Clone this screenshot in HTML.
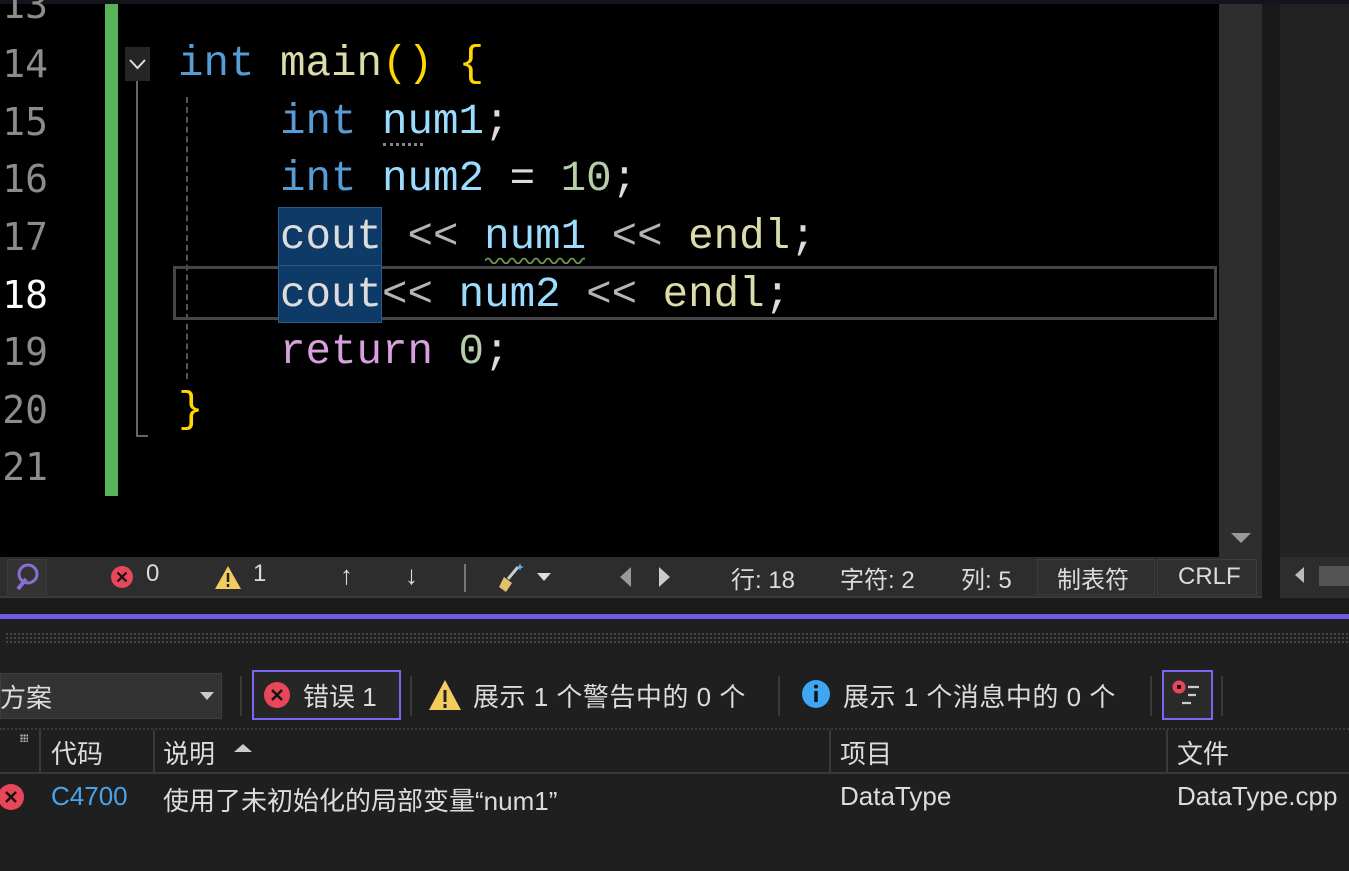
<!DOCTYPE html>
<html><head><meta charset="utf-8"><style>
*{margin:0;padding:0;box-sizing:border-box}
body{width:1349px;height:871px;overflow:hidden;background:#1f1f1f;position:relative;font-family:"Liberation Sans","Noto Sans CJK SC",sans-serif;color:#dcdcdc}
.abs{position:absolute}
.code{font-family:"Liberation Mono","DejaVu Sans Mono",monospace;font-size:42.5px;line-height:57.6px;white-space:pre;position:absolute}
.ln{position:absolute;left:0;width:48px;text-align:right;font-family:"DejaVu Sans Mono",monospace;font-size:38px;line-height:57.6px;color:#8c8c8c}
.k{color:#569cd6}.f{color:#dcdcaa}.p{color:#ffd700}.v{color:#9cdcfe}.n{color:#b5cea8}.r{color:#d8a0df}.o{color:#b4b4b4}.w{color:#dcdcdc}
.sb{font-size:24px;color:#dcdcdc;top:560px}
.t{font-size:26px;color:#dcdcdc}
</style></head><body>
<div class="abs" style="left:0;top:0;width:1349px;height:4px;background:#14151c"></div>
<div class="abs" style="left:0;top:4px;width:1219px;height:553px;background:#000"></div>
<div class="abs" style="left:1219px;top:4px;width:43px;height:553px;background:#2e2e2e"></div>
<div class="abs" style="left:1231px;top:533px;width:0;height:0;border-left:10px solid transparent;border-right:10px solid transparent;border-top:10px solid #999"></div>
<div class="abs" style="left:1262px;top:4px;width:18px;height:600px;background:#191919"></div>
<div class="abs" style="left:1280px;top:4px;width:69px;height:553px;background:#222"></div>
<div class="abs" style="left:105px;top:4px;width:13px;height:492px;background:#57b45a"></div>
<div class="abs" style="left:125px;top:47px;width:25px;height:34px;background:#252525"></div>
<svg class="abs" style="left:125px;top:47px" width="25" height="34"><path d="M5 13 L12.5 21 L20 13" stroke="#ddd" stroke-width="2" fill="none"/></svg>
<div class="abs" style="left:136px;top:81px;width:2px;height:356px;background:#666"></div>
<div class="abs" style="left:136px;top:435px;width:12px;height:2px;background:#666"></div>
<div class="abs" style="left:186px;top:97px;width:0;height:282px;border-left:2px dashed #555"></div>
<div class="abs" style="left:173px;top:266px;width:1044px;height:54px;border:3px solid #464646"></div>
<div class="abs" style="left:278px;top:207px;width:104px;height:59px;background:#0e3a68;border:1px solid #2a5a8e"></div>
<div class="abs" style="left:278px;top:265px;width:104px;height:58px;background:#0e3a68;border:1px solid #2a5a8e"></div>
<div class="ln" style="top:-23px">13</div>
<div class="ln" style="top:36px">14</div>
<div class="ln" style="top:94px">15</div>
<div class="ln" style="top:151px">16</div>
<div class="ln" style="top:209px">17</div>
<div class="ln" style="top:267px;color:#fff">18</div>
<div class="ln" style="top:324px">19</div>
<div class="ln" style="top:382px">20</div>
<div class="ln" style="top:439px">21</div>
<div class="code" style="left:178px;top:36px"><span class="k">int</span> <span class="f">main</span><span class="p">()</span> <span class="p">{</span></div>
<div class="code" style="left:280px;top:94px"><span class="k">int</span> <span class="v">num1</span><span class="w">;</span></div>
<div class="abs" style="left:383px;top:143px;width:40px;border-top:3px dotted #888"></div>
<div class="code" style="left:280px;top:151px"><span class="k">int</span> <span class="v">num2</span> <span class="w">=</span> <span class="n">10</span><span class="w">;</span></div>
<div class="code" style="left:280px;top:209px"><span class="w">cout</span> <span class="o">&lt;&lt;</span> <span class="v">num1</span> <span class="o">&lt;&lt;</span> <span class="f">endl</span><span class="w">;</span></div>
<svg class="abs" style="left:485px;top:256px" width="100" height="8"><path d="M0 5 q3-5 6 0 t6 0 t6 0 t6 0 t6 0 t6 0 t6 0 t6 0 t6 0 t6 0 t6 0 t6 0 t6 0 t6 0 t6 0 t6 0 t6 0" stroke="#6a9955" stroke-width="1.8" fill="none"/></svg>
<div class="code" style="left:280px;top:267px"><span class="w">cout</span><span class="o">&lt;&lt;</span> <span class="v">num2</span> <span class="o">&lt;&lt;</span> <span class="f">endl</span><span class="w">;</span></div>
<div class="code" style="left:280px;top:324px"><span class="r">return</span> <span class="n">0</span><span class="w">;</span></div>
<div class="code" style="left:178px;top:382px"><span class="p">}</span></div>
<div class="abs" style="left:0;top:557px;width:1262px;height:41px;background:#2d2d2d;border-bottom:2px solid #3a3a3a"></div>
<div class="abs" style="left:1280px;top:557px;width:69px;height:41px;background:#2d2d2d"></div>
<div class="abs" style="left:7px;top:559px;width:40px;height:36px;background:#333;border:1px solid #3c3c3c"></div>
<svg class="abs" style="left:12px;top:561px" width="30" height="32"><circle cx="16" cy="13" r="9" fill="none" stroke="#8a6fd0" stroke-width="3"/><path d="M6 28 L14 18" stroke="#8a6fd0" stroke-width="4"/></svg>
<svg class="abs" style="left:109px;top:564px" width="26" height="26"><circle cx="13" cy="13" r="11" fill="#e8475a"/><path d="M8.5 8.5 L17.5 17.5 M17.5 8.5 L8.5 17.5" stroke="#111" stroke-width="2.2"/></svg>
<div class="abs sb" style="left:146px">0</div>
<svg class="abs" style="left:214px;top:565px" width="28" height="25"><path d="M14 1 L27 24 L1 24 Z" fill="#f2cc5c"/><path d="M14 8 V17 M14 19 V22" stroke="#222" stroke-width="2.5"/></svg>
<div class="abs sb" style="left:253px">1</div>
<div class="abs sb" style="left:340px;font-size:26px">↑</div>
<div class="abs sb" style="left:405px;font-size:26px">↓</div>
<div class="abs" style="left:464px;top:564px;width:2px;height:28px;background:#777"></div>
<svg class="abs" style="left:496px;top:561px" width="32" height="32"><path d="M22 6 L12 18" stroke="#ccc" stroke-width="3"/><path d="M8 16 L16 22 L10 31 L3 26 Z" fill="#e0c070"/><path d="M24 2 l1 3 3 1 -3 1 -1 3 -1-3 -3-1 3-1z" fill="#5fb0f0"/></svg>
<div class="abs" style="left:537px;top:573px;width:0;height:0;border-left:7px solid transparent;border-right:7px solid transparent;border-top:8px solid #ddd"></div>
<div class="abs" style="left:620px;top:567px;width:0;height:0;border-top:10px solid transparent;border-bottom:10px solid transparent;border-right:11px solid #999"></div>
<div class="abs" style="left:659px;top:567px;width:0;height:0;border-top:10px solid transparent;border-bottom:10px solid transparent;border-left:11px solid #ccc"></div>
<div class="abs sb" style="left:731px">行: 18</div>
<div class="abs sb" style="left:840px">字符: 2</div>
<div class="abs sb" style="left:961px">列: 5</div>
<div class="abs" style="left:1037px;top:559px;width:118px;height:36px;border:1px solid #3c3c3c;background:#2f2f2f"></div>
<div class="abs sb" style="left:1057px">制表符</div>
<div class="abs" style="left:1157px;top:559px;width:100px;height:36px;border:1px solid #3c3c3c;background:#2f2f2f"></div>
<div class="abs sb" style="left:1178px;top:563px">CRLF</div>
<div class="abs" style="left:1295px;top:567px;width:0;height:0;border-top:8px solid transparent;border-bottom:8px solid transparent;border-right:9px solid #bbb"></div>
<div class="abs" style="left:1319px;top:566px;width:30px;height:20px;background:#555"></div>
<div class="abs" style="left:0;top:599px;width:1349px;height:15px;background:#1a1a1a"></div>
<div class="abs" style="left:0;top:614px;width:1349px;height:5px;background:#6f5ce0"></div>
<div class="abs" style="left:5px;top:632px;width:1344px;height:12px;background-image:radial-gradient(#4a4a4a 1px,transparent 1.2px);background-size:4px 4px"></div>
<div class="abs" style="left:0;top:673px;width:222px;height:46px;background:#333;border:1px solid #3e3e3e"></div>
<div class="abs t" style="left:0;top:678px">方案</div>
<div class="abs" style="left:200px;top:692px;width:0;height:0;border-left:7px solid transparent;border-right:7px solid transparent;border-top:8px solid #ccc"></div>
<div class="abs" style="left:240px;top:676px;width:2px;height:40px;background:#3a3a3a"></div>
<div class="abs" style="left:252px;top:670px;width:149px;height:50px;border:2px solid #7a66f0;background:#262626"></div>
<svg class="abs" style="left:262px;top:680px" width="30" height="30"><circle cx="15" cy="15" r="13" fill="#e8475a"/><path d="M10 10 L20 20 M20 10 L10 20" stroke="#111" stroke-width="2.4"/></svg>
<div class="abs t" style="left:303px;top:677px">错误 1</div>
<div class="abs" style="left:410px;top:676px;width:2px;height:40px;background:#3a3a3a"></div>
<svg class="abs" style="left:428px;top:679px" width="34" height="32"><path d="M17 1 L33 31 L1 31 Z" fill="#f2cc5c"/><path d="M17 11 V23 M17 25 V29" stroke="#222" stroke-width="3"/></svg>
<div class="abs t" style="left:473px;top:677px;letter-spacing:0.5px">展示 1 个警告中的 0 个</div>
<div class="abs" style="left:778px;top:676px;width:2px;height:40px;background:#3a3a3a"></div>
<svg class="abs" style="left:801px;top:679px" width="30" height="30"><circle cx="15" cy="15" r="14" fill="#3ea6f5"/><path d="M15 12 V23" stroke="#111" stroke-width="3.5"/><circle cx="15" cy="7.5" r="2" fill="#111"/></svg>
<div class="abs t" style="left:843px;top:677px;letter-spacing:0.5px">展示 1 个消息中的 0 个</div>
<div class="abs" style="left:1150px;top:676px;width:2px;height:40px;background:#3a3a3a"></div>
<div class="abs" style="left:1162px;top:670px;width:51px;height:50px;border:2px solid #7a66f0;background:#2a2a2a"></div>
<svg class="abs" style="left:1168px;top:676px" width="40" height="40"><circle cx="11" cy="11" r="6.5" fill="#e8475a"/><rect x="9" y="9" width="4" height="4" fill="#111"/><path d="M20 11 H31 M20 19 H28 M14 27 H23" stroke="#ccc" stroke-width="2.2"/></svg>
<div class="abs" style="left:1221px;top:676px;width:2px;height:40px;background:#3a3a3a"></div>
<div class="abs" style="left:0;top:728px;width:1349px;height:0;border-top:2px dotted #3a3a3a"></div>
<div class="abs" style="left:20px;top:734px;width:8px;height:8px;background-image:radial-gradient(#bbb 1px,transparent 1.3px);background-size:3px 3px"></div>
<div class="abs" style="left:39px;top:730px;width:2px;height:43px;background:#3a3a3a"></div>
<div class="abs" style="left:153px;top:730px;width:2px;height:43px;background:#3a3a3a"></div>
<div class="abs" style="left:829px;top:730px;width:2px;height:43px;background:#3a3a3a"></div>
<div class="abs" style="left:1166px;top:730px;width:2px;height:43px;background:#3a3a3a"></div>
<div class="abs" style="left:0;top:772px;width:1349px;height:2px;background:#383838"></div>
<div class="abs t" style="left:51px;top:734px">代码</div>
<div class="abs t" style="left:163px;top:734px">说明</div>
<div class="abs" style="left:234px;top:744px;width:0;height:0;border-left:9px solid transparent;border-right:9px solid transparent;border-bottom:8px solid #ccc"></div>
<div class="abs t" style="left:840px;top:734px">项目</div>
<div class="abs t" style="left:1177px;top:734px">文件</div>
<svg class="abs" style="left:-2px;top:782px" width="30" height="30"><circle cx="13" cy="15" r="13" fill="#e8475a"/><path d="M8 10 L18 20 M18 10 L8 20" stroke="#111" stroke-width="2.4"/></svg>
<div class="abs t" style="left:51px;top:781px;color:#4aa3e8">C4700</div>
<div class="abs t" style="left:163px;top:781px">使用了未初始化的局部变量“num1”</div>
<div class="abs t" style="left:840px;top:781px">DataType</div>
<div class="abs t" style="left:1177px;top:781px;white-space:nowrap">DataType.cpp</div>
</body></html>
